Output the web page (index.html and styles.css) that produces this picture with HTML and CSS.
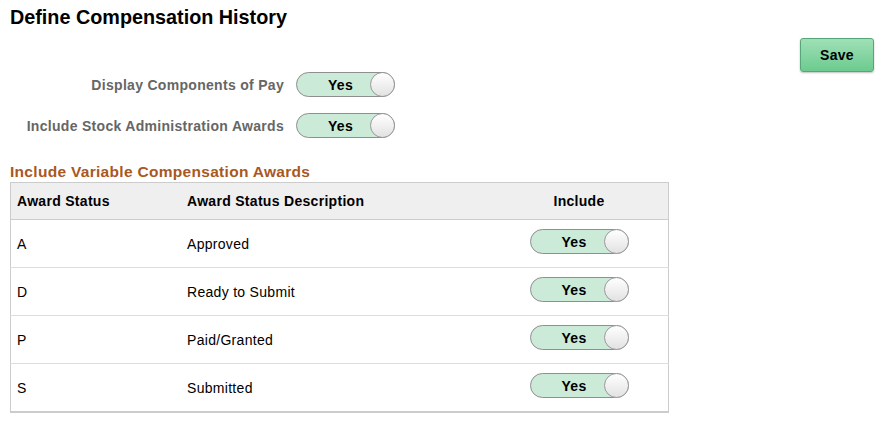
FILE: index.html
```html
<!DOCTYPE html>
<html lang="en">
<head>
    <meta charset="UTF-8">
    <title>Define Compensation History</title>
    <link rel="stylesheet" href="styles.css">
</head>
<body>
    <div class="page">
        <div class="top">
            <div class="main">
                <h1>Define Compensation History</h1>
                <div class="fields">
                    <label class="field-label">Display Components of Pay</label>
                    <div class="toggle"><span class="toggle-text">Yes</span><span class="knob"></span></div>
                    <label class="field-label">Include Stock Administration Awards</label>
                    <div class="toggle"><span class="toggle-text">Yes</span><span class="knob"></span></div>
                </div>
            </div>
            <button class="save-btn" type="button">Save</button>
        </div>

        <h2 class="section-title">Include Variable Compensation Awards</h2>
        <table class="grid">
            <thead>
                <tr>
                    <th class="col-status">Award Status</th>
                    <th class="col-desc">Award Status Description</th>
                    <th class="col-include">Include</th>
                </tr>
            </thead>
            <tbody>
                <tr>
                    <td>A</td>
                    <td>Approved</td>
                    <td class="col-include"><div class="toggle"><span class="toggle-text">Yes</span><span class="knob"></span></div></td>
                </tr>
                <tr>
                    <td>D</td>
                    <td>Ready to Submit</td>
                    <td class="col-include"><div class="toggle"><span class="toggle-text">Yes</span><span class="knob"></span></div></td>
                </tr>
                <tr>
                    <td>P</td>
                    <td>Paid/Granted</td>
                    <td class="col-include"><div class="toggle"><span class="toggle-text">Yes</span><span class="knob"></span></div></td>
                </tr>
                <tr>
                    <td>S</td>
                    <td>Submitted</td>
                    <td class="col-include"><div class="toggle"><span class="toggle-text">Yes</span><span class="knob"></span></div></td>
                </tr>
            </tbody>
        </table>
    </div>
</body>
</html>
```

FILE: styles.css
```css
body { margin: 0; font-family: Arial, "Liberation Sans", Helvetica, sans-serif; font-size: 14px; letter-spacing: 0.3px; color: #000; background: #fff; }
.page { padding: 0 8px 0 10px; }
.top { display: flex; justify-content: space-between; align-items: flex-start; }
h1 { font-size: 19.8px; font-weight: 700; line-height: 24px; letter-spacing: 0; margin: 5px 0 0; }
.fields { display: grid; grid-template-columns: 274px 99px; column-gap: 12px; row-gap: 16px; align-items: center; margin-top: 43px; }
.field-label { text-align: right; font-weight: 700; color: #666; }
.save-btn { margin-top: 38px; width: 74px; height: 34px; font-family: inherit; font-size: 14px; font-weight: 700; letter-spacing: 0.3px; color: #000; background: linear-gradient(#9fe0b6, #6ccb8f); border: 1px solid #55a777; border-radius: 3px; box-shadow: 0 1px 2px rgba(0, 0, 0, 0.25); cursor: pointer; }
.toggle { position: relative; width: 99px; height: 25px; box-sizing: border-box; border: 1px solid #8f8f8f; border-radius: 13px; background: #cbead8; display: flex; align-items: center; }
.toggle-text { width: 87px; text-align: center; font-weight: 700; font-size: 14px; }
.knob { position: absolute; right: -1px; top: -1px; width: 25px; height: 25px; box-sizing: border-box; border: 1px solid #999; border-radius: 50%; background: linear-gradient(#fff, #e2e2e2); }
.section-title { font-size: 15.5px; font-weight: 700; color: #a9581f; margin: 25px 0 0; line-height: 18px; }
.grid { border-collapse: collapse; width: 659px; margin-top: 1px; border: 1px solid #ccc; border-bottom: 2px solid #ccc; }
.grid th { background: #efefef; height: 36px; text-align: left; font-weight: 700; padding: 0 6px; border-bottom: 1px solid #ccc; }
.grid td { height: 47px; padding: 0 6px; border-bottom: 1px solid #ddd; }
.col-status { width: 158px; }
.col-desc { width: 297px; }
.grid .col-include { text-align: center; }
.grid td.col-include { padding-bottom: 4px; height: 43px; }
.grid td.col-include .toggle { margin: 0 auto; }
```
